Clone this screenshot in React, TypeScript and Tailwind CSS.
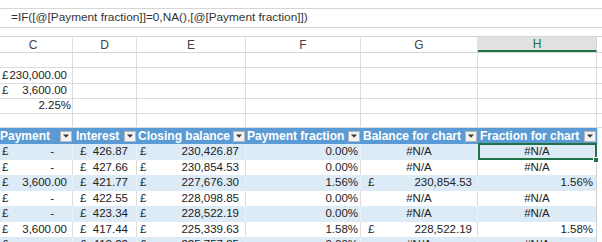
import React from 'react';

type Cell =
  | { t: 'acct'; v: string }
  | { t: 'dash' }
  | { t: 'right'; v: string }
  | { t: 'center'; v: string }
  | { t: 'empty' };

const cols = [
  { letter: 'C', width: 'w-[73px]', pl: 'pl-[2px]', pr: 'pr-[5px]', head: 'Payment', headPl: 'pl-0', letterPad: 'pr-[6px]' },
  { letter: 'D', width: 'w-[64px]', pl: 'pl-[7px]', pr: 'pr-[8px]', head: 'Interest', headPl: 'pl-[3px]', letterPad: '' },
  { letter: 'E', width: 'w-[109px]', pl: 'pl-[3px]', pr: 'pr-[6px]', head: 'Closing balance', headPl: 'pl-[1px]', letterPad: '' },
  { letter: 'F', width: 'w-[115px]', pl: 'pl-[3px]', pr: 'pr-[2px]', head: 'Payment fraction', headPl: 'pl-[1px]', letterPad: '' },
  { letter: 'G', width: 'w-[117px]', pl: 'pl-[7px]', pr: 'pr-[5px]', head: 'Balance for chart', headPl: 'pl-[2px]', letterPad: '' },
  { letter: 'H', width: 'w-[119px]', pl: 'pl-[3px]', pr: 'pr-[3px]', head: 'Fraction for chart', headPl: 'pl-[2px]', letterPad: '' },
];

const m = (v: string): Cell => ({ t: 'acct', v });
const r = (v: string): Cell => ({ t: 'right', v });
const c = (v: string): Cell => ({ t: 'center', v });
const dash: Cell = { t: 'dash' };
const empty: Cell = { t: 'empty' };

// rows above the table (only column C holds values)
const topRows: { h: string; cells: Cell[] }[] = [
  { h: 'h-[15px]', cells: [empty, empty, empty, empty, empty, empty] },
  { h: 'h-[16px]', cells: [m('230,000.00'), empty, empty, empty, empty, empty] },
  { h: 'h-[15px]', cells: [m('3,600.00'), empty, empty, empty, empty, empty] },
  { h: 'h-[15px]', cells: [{ t: 'right', v: '2.25%' }, empty, empty, empty, empty, empty] },
  { h: 'h-[14px]', cells: [empty, empty, empty, empty, empty, empty] },
];

const tableRows: { h: string; cells: Cell[] }[] = [
  { h: 'h-[16px]', cells: [dash, m('426.87'), m('230,426.87'), r('0.00%'), c('#N/A'), c('#N/A')] },
  { h: 'h-[15px]', cells: [dash, m('427.66'), m('230,854.53'), r('0.00%'), c('#N/A'), c('#N/A')] },
  { h: 'h-[16px]', cells: [m('3,600.00'), m('421.77'), m('227,676.30'), r('1.56%'), m('230,854.53'), r('1.56%')] },
  { h: 'h-[15px]', cells: [dash, m('422.55'), m('228,098.85'), r('0.00%'), c('#N/A'), c('#N/A')] },
  { h: 'h-[16px]', cells: [dash, m('423.34'), m('228,522.19'), r('0.00%'), c('#N/A'), c('#N/A')] },
  { h: 'h-[15px]', cells: [m('3,600.00'), m('417.44'), m('225,339.63'), r('1.58%'), m('228,522.19'), r('1.58%')] },
  { h: 'h-[16px]', cells: [dash, m('418.22'), m('225,757.85'), r('0.00%'), c('#N/A'), c('#N/A')] },
];

function CellContent({ cell, pl, pr }: { cell: Cell; pl: string; pr: string }) {
  if (cell.t === 'empty') return null;
  if (cell.t === 'center') {
    return <div className="flex w-full justify-center">{cell.v}</div>;
  }
  if (cell.t === 'right') {
    return <div className={`flex w-full justify-end ${pr}`}>{cell.v}</div>;
  }
  return (
    <div className={`flex w-full justify-between ${pl} ${pr}`}>
      <span>£</span>
      {cell.t === 'dash' ? <span className="mr-[13px]">-</span> : <span>{cell.v}</span>}
    </div>
  );
}

function FilterButton() {
  return (
    <span className="ml-auto mr-[1px] flex h-[11px] w-[12px] shrink-0 items-center justify-center border border-[#b7b7b7] bg-[#f3f3f3]">
      <svg width="6" height="4" viewBox="0 0 6 4">
        <path d="M0 0.5h6L3 3.8z" fill="#3a3a3a" />
      </svg>
    </span>
  );
}

export default function App() {
  return (
    <div className="h-[242px] w-[602px] overflow-hidden bg-white font-['Liberation_Sans',Arial,sans-serif] text-[#222]">
      <div className="h-[8px]" />
      {/* formula bar */}
      <div className="flex h-[20px] items-center border-y border-[#d6d6d6] pl-[11px] text-[11.8px] text-[#333]">
        =IF([@[Payment fraction]]=0,NA(),[@[Payment fraction]])
      </div>
      <div className="h-[8px]" />

      {/* column letters */}
      <div className="flex h-[17px] border-y border-[#d6d6d6] text-[12px] text-[#444]">
        {cols.map(col =>
          col.letter === 'H' ? (
            <div
              key={col.letter}
              className={`${col.width} flex items-center justify-center border-r border-b-2 border-r-[#d6d6d6] border-b-[#217346] bg-[#e1e1e1] text-[#217346]`}
            >
              H
            </div>
          ) : (
            <div
              key={col.letter}
              className={`${col.width} flex items-center justify-center border-r border-[#e0e0e0] ${col.letterPad}`}
            >
              {col.letter}
            </div>
          )
        )}
        <div className="flex-1" />
      </div>

      {/* rows above the table */}
      {topRows.map((row, ri) => (
        <div key={ri} className={`flex ${row.h} text-[11.5px]`}>
          {row.cells.map((cell, ci) => (
            <div
              key={ci}
              className={`${cols[ci].width} flex items-center border-r border-b border-[#dcdcdc]`}
            >
              <CellContent cell={cell} pl={cols[ci].pl} pr={cell.t === 'right' ? 'pr-[1px]' : cols[ci].pr} />
            </div>
          ))}
          <div className="flex-1 border-b border-[#dcdcdc]" />
        </div>
      ))}

      {/* table header */}
      <div className="flex h-[16px] text-[12px] font-bold text-white">
        {cols.map(col => (
          <div key={col.letter} className={`${col.width} flex items-center bg-[#5b9bd5] ${col.headPl}`}>
            <span className="whitespace-nowrap">{col.head}</span>
            <FilterButton />
          </div>
        ))}
        <div className="flex-1 border-l border-[#dcdcdc]" />
      </div>

      {/* table body */}
      {tableRows.map((row, ri) => {
        const banded = ri % 2 === 0;
        return (
          <div key={ri} className={`flex ${row.h} text-[11.5px]`}>
            {row.cells.map((cell, ci) => {
              const isLast = ci === cols.length - 1;
              const selected = ri === 0 && isLast;
              return (
                <div
                  key={ci}
                  className={`${cols[ci].width} relative flex items-center border-r ${
                    banded ? 'bg-[#ddebf7]' : 'bg-white'
                  } ${isLast ? 'border-[#d0d0d0]' : banded ? 'border-[#e9f2fa]' : 'border-[#dcdcdc]'}`}
                >
                  <CellContent cell={cell} pl={cols[ci].pl} pr={cols[ci].pr} />
                  {selected && (
                    <>
                      <div className="absolute -top-[1px] left-0 -right-[1px] bottom-0 z-10 border-2 border-[#217346]" />
                      <div className="absolute -bottom-[3px] -right-[3px] z-20 h-[6px] w-[6px] border border-white bg-[#217346]" />
                    </>
                  )}
                </div>
              );
            })}
            <div className="flex-1" />
          </div>
        );
      })}
    </div>
  );
}
